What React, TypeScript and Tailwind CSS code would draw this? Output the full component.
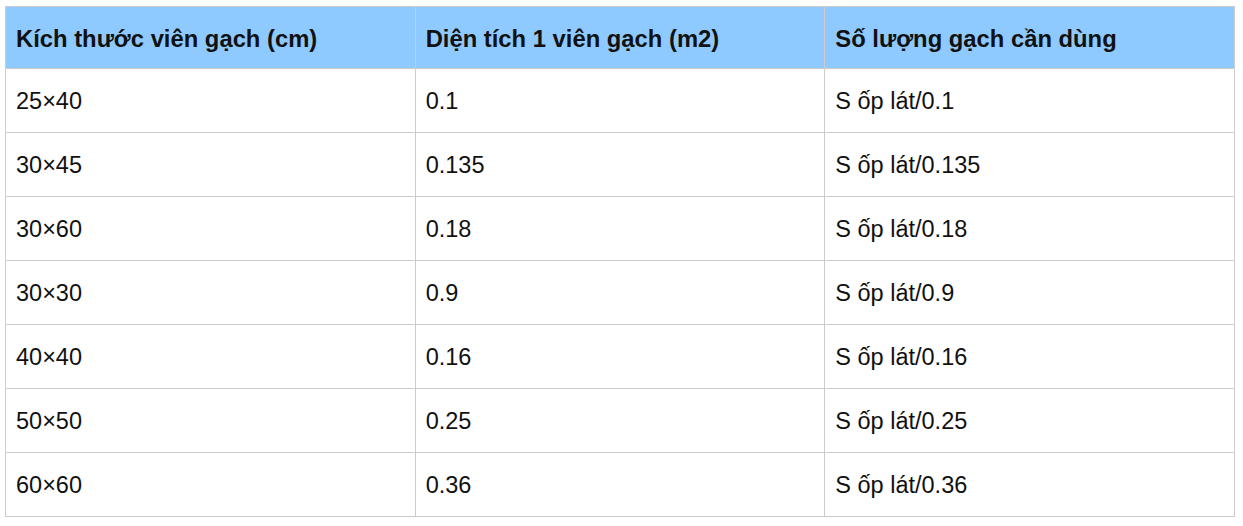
const HEADERS = ['Kích thước viên gạch (cm)', 'Diện tích 1 viên gạch (m2)', 'Số lượng gạch cần dùng'];

const ROWS = [
  ['25×40', '0.1', 'S ốp lát/0.1'],
  ['30×45', '0.135', 'S ốp lát/0.135'],
  ['30×60', '0.18', 'S ốp lát/0.18'],
  ['30×30', '0.9', 'S ốp lát/0.9'],
  ['40×40', '0.16', 'S ốp lát/0.16'],
  ['50×50', '0.25', 'S ốp lát/0.25'],
  ['60×60', '0.36', 'S ốp lát/0.36'],
];

export default function App() {
  return (
    <div className="bg-white pt-[6px] pl-[5px] w-[1243px] h-[526px]" style={{ fontFamily: '"Liberation Sans", Arial, sans-serif' }}>
      <table className="border-collapse w-[1230px] table-fixed text-[23.5px] text-[#111]">
        <thead>
          <tr className="bg-[#8ecaff] h-[62px]">
            {HEADERS.map((h) => (
              <th key={h} className="border border-[#cccccc] px-[10px] pt-[2px] text-left text-[23.8px] font-bold align-middle">
                {h}
              </th>
            ))}
          </tr>
        </thead>
        <tbody>
          {ROWS.map((r) => (
            <tr key={r[0]} className="h-[64px]">
              {r.map((c, i) => (
                <td key={i} className="border border-[#cccccc] px-[10px] pt-[2px] align-middle">
                  {c}
                </td>
              ))}
            </tr>
          ))}
        </tbody>
      </table>
    </div>
  );
}
